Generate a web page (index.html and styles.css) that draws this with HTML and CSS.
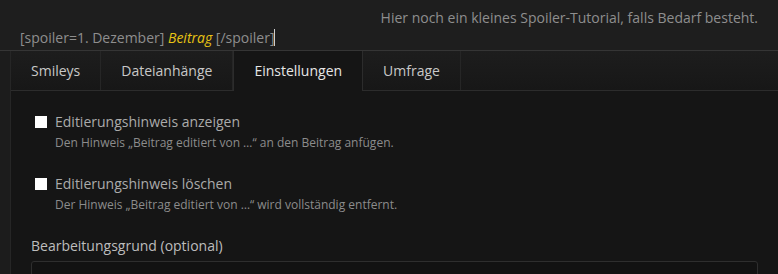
FILE: index.html
```html
<!DOCTYPE html>
<html lang="de">
<head>
    <meta charset="UTF-8">
    <title>Beitrag bearbeiten</title>
    <link rel="stylesheet" href="styles.css">
</head>
<body>
    <div class="editor-text">
        <p class="tutorial-hint">Hier noch ein kleines Spoiler-Tutorial, falls Bedarf besteht.</p>
        <p class="code-line">[spoiler=1. Dezember] <em class="highlight">Beitrag</em> [/spoiler]<span class="caret"></span></p>
    </div>

    <div class="editor-tabs">
        <ul class="tab-list">
            <li class="tab">Smileys</li>
            <li class="tab">Dateianhänge</li>
            <li class="tab active">Einstellungen</li>
            <li class="tab">Umfrage</li>
        </ul>

        <div class="tab-content">
            <div class="option">
                <label class="option-label">
                    <input type="checkbox" class="option-check">
                    <span>Editierungshinweis anzeigen</span>
                </label>
                <div class="option-desc">Den Hinweis „Beitrag editiert von …“ an den Beitrag anfügen.</div>
            </div>

            <div class="option">
                <label class="option-label">
                    <input type="checkbox" class="option-check">
                    <span>Editierungshinweis löschen</span>
                </label>
                <div class="option-desc">Der Hinweis „Beitrag editiert von …“ wird vollständig entfernt.</div>
            </div>

            <div class="reason">
                <div class="reason-label">Bearbeitungsgrund (optional)</div>
                <div class="reason-input"></div>
            </div>
        </div>
    </div>
</body>
</html>
```

FILE: styles.css
```css
body {
    margin: 0;
    background-color: #1c1c1c;
    font-family: "Open Sans", "Liberation Sans", sans-serif;
    color: #8c8c8c;
    overflow: hidden;
}

/* Text area of the editor */
.editor-text {
    background-color: #1e1e1e;
    padding: 8px 20px 0 20px;
    height: 42px;
    border-bottom: 1px solid #353535;
}

.tutorial-hint {
    margin: 0;
    text-align: right;
    font-size: 14px;
    line-height: 20px;
    color: #8e8e8e;
}

.code-line {
    margin: 0;
    font-size: 14px;
    line-height: 20px;
    color: #8e8e8e;
}

.highlight {
    color: #e8c414;
}

.caret {
    display: inline-block;
    width: 1px;
    height: 17px;
    background-color: #cfcfcf;
    vertical-align: -3px;
}

/* Tabs */
.editor-tabs {
    margin-left: 10px;
    background-color: #151515;
    border-left: 1px solid #262626;
}

.tab-list {
    display: flex;
    margin: 0;
    padding: 0;
    list-style: none;
    height: 39px;
    background: linear-gradient(#1d1d1d, #171717);
    border-bottom: 1px solid #2c2c2c;
}

.tab {
    padding: 0 20px;
    font-size: 14px;
    line-height: 39px;
    color: #c8c8c8;
    border-right: 1px solid #262626;
}

.tab.active {
    background-color: #151515;
    color: #e6e6e6;
    border-left: 1px solid #2c2c2c;
    border-right: 1px solid #2c2c2c;
    margin-bottom: -1px;
    height: 40px;
}

/* Settings panel */
.tab-content {
    padding: 21px 20px 0 20px;
    height: 200px;
}

.option {
    margin-bottom: 22px;
}

.option-label {
    display: flex;
    align-items: center;
    gap: 8px;
    padding-left: 4px;
    font-size: 14px;
    line-height: 20px;
    color: #ababab;
}

.option-check {
    appearance: none;
    width: 12px;
    height: 12px;
    margin: 0;
    background-color: #ffffff;
    border: none;
}

.option-desc {
    padding-left: 24px;
    margin-top: 2px;
    font-size: 12px;
    line-height: 18px;
    color: #8c8c8c;
}

.reason-label {
    font-size: 14px;
    line-height: 20px;
    color: #bdbdbd;
}

.reason-input {
    margin-top: 5px;
    height: 40px;
    background-color: #121212;
    border: 1px solid #2e2e2e;
    border-radius: 3px;
}
```
